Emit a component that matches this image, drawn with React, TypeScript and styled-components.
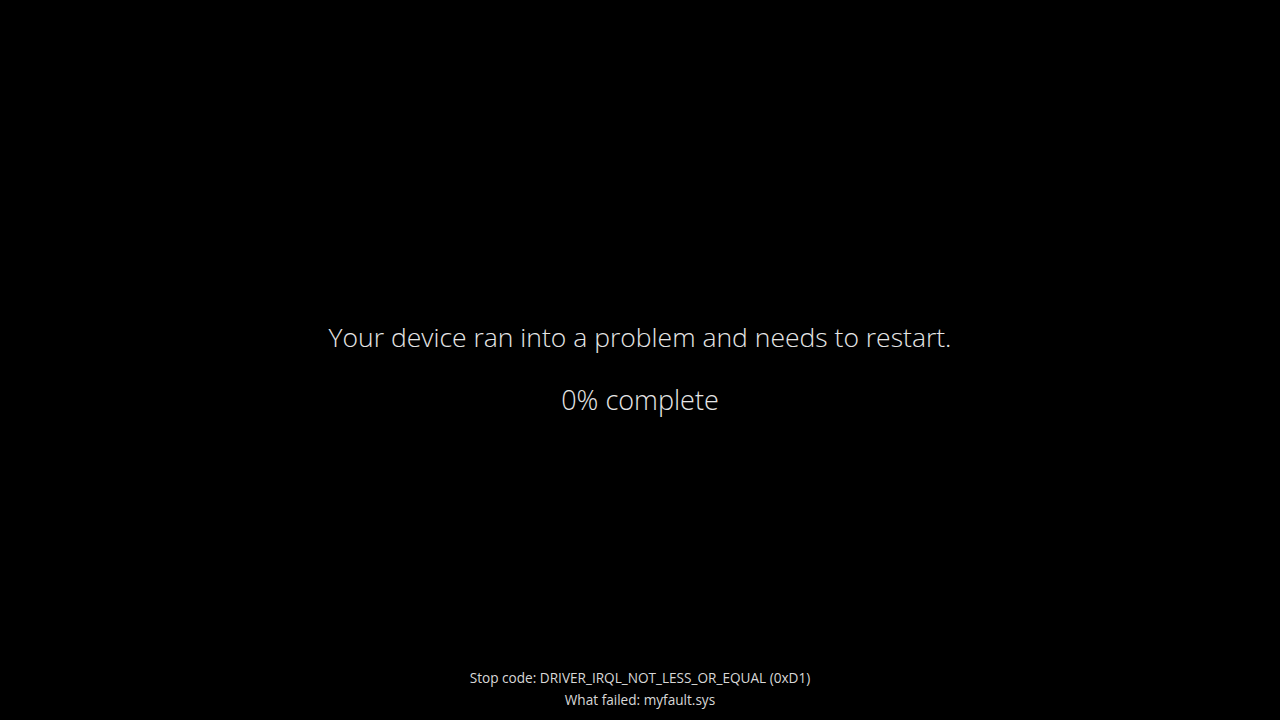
import React from 'react';
import styled, { createGlobalStyle } from 'styled-components';

const GlobalStyle = createGlobalStyle`
  html, body {
    margin: 0;
    padding: 0;
    background: #000;
  }
  body {
    font-family: "Open Sans", "Noto Sans", sans-serif;
  }
`;

const Screen = styled.div`
  width: 1280px;
  height: 720px;
  background: #000;
  color: #e6e6e6;
  display: flex;
  flex-direction: column;
  align-items: center;
  box-sizing: border-box;
  padding-top: 318px;
  padding-bottom: 9px;
`;

const Message = styled.div`
  flex: 1;
  display: flex;
  flex-direction: column;
  align-items: center;
  gap: 25px;
`;

const Headline = styled.h1`
  margin: 0;
  font-size: 26.5px;
  font-weight: 300;
  line-height: 38px;
`;

const Progress = styled.p`
  margin: 0;
  font-size: 27px;
  font-weight: 300;
  line-height: 38px;
`;

const Details = styled.div`
  display: flex;
  flex-direction: column;
  align-items: center;
  font-size: 13.6px;
  font-weight: 400;
  line-height: 22px;
  color: #d8d8d8;
`;

const DetailLine = styled.span``;

const App: React.FC = () => {
  return (
    <>
      <GlobalStyle />
      <Screen>
        <Message>
          <Headline>Your device ran into a problem and needs to restart.</Headline>
          <Progress>0% complete</Progress>
        </Message>
        <Details>
          <DetailLine>Stop code: DRIVER_IRQL_NOT_LESS_OR_EQUAL (0xD1)</DetailLine>
          <DetailLine>What failed: myfault.sys</DetailLine>
        </Details>
      </Screen>
    </>
  );
};

export default App;
